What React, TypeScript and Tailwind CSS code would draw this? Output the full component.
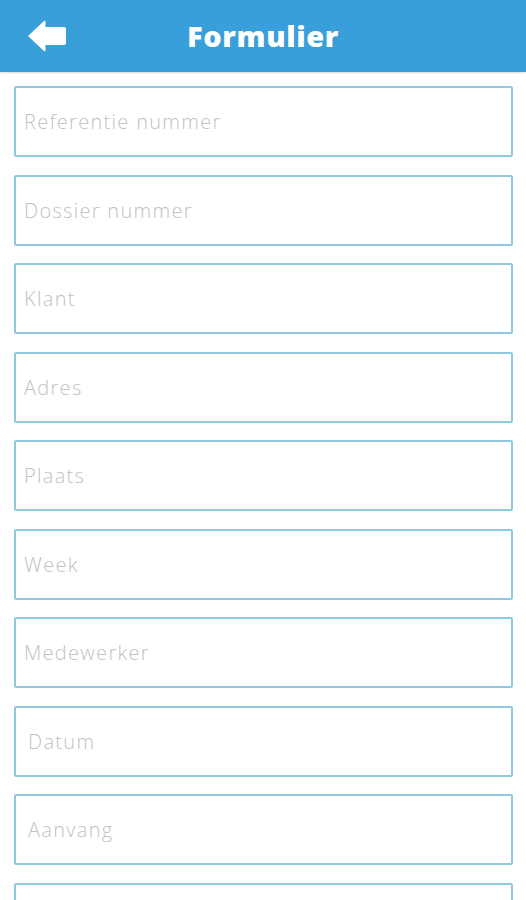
import React from "react";

const fields = [
  { label: "Referentie nummer", indent: false },
  { label: "Dossier nummer", indent: false },
  { label: "Klant", indent: false },
  { label: "Adres", indent: false },
  { label: "Plaats", indent: false },
  { label: "Week", indent: false },
  { label: "Medewerker", indent: false },
  { label: "Datum", indent: true },
  { label: "Aanvang", indent: true },
  { label: "Einde", indent: true },
];

function BackArrow() {
  return (
    <svg width="40" height="34" viewBox="0 0 40 34" className="block">
      <path
        d="M1 17 L17 2 Q18 1 18.5 2.5 L18.5 8 L37 8 Q39 8 39 10 L39 24 Q39 26 37 26 L18.5 26 L18.5 31.5 Q18 33 17 32 Z"
        fill="#ffffff"
      />
    </svg>
  );
}

export default function App() {
  return (
    <div className="w-[526px] h-[900px] overflow-hidden bg-white font-['Open_Sans',sans-serif]">
      <header className="h-[72px] bg-[#389fda] relative flex items-center justify-center shadow-[0_1px_2px_rgba(0,0,0,0.15)]">
        <button className="absolute left-[27px] top-[19px]">
          <BackArrow />
        </button>
        <h1 className="text-white text-[29px] font-extrabold tracking-[0.6px] leading-none pb-[1px]">
          Formulier
        </h1>
      </header>

      <form className="flex flex-col gap-[17.5px] px-[14px] pt-[14px]">
        {fields.map((f) => (
          <input
            key={f.label}
            type="text"
            placeholder={f.label}
            className={`h-[71px] w-[499px] shrink-0 border-2 border-[#92c8df] rounded-[2px] ${f.indent ? "px-[12px]" : "px-[8px]"} text-[20px] font-light tracking-[1.3px] text-gray-700 placeholder:text-[#c2c2c2] outline-none font-['Open_Sans',sans-serif]`}
          />
        ))}
      </form>
    </div>
  );
}
